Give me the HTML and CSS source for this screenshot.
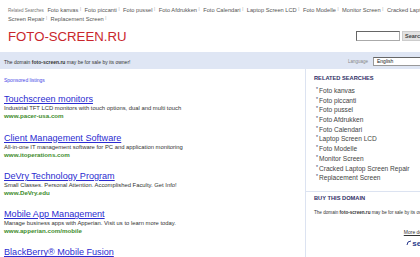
FILE: index.html
```html
<!DOCTYPE html>
<html lang="en">
<head>
    <meta charset="UTF-8">
    <title>foto-screen.ru</title>
    <link rel="stylesheet" href="styles.css">
</head>
<body>

    <div class="page">
        <div class="topbar">
            <span class="rs-label">Related Searches</span>
            <a href="#">Foto kanvas</a> <span class="sep">|</span>
            <a href="#">Foto piccanti</a> <span class="sep">|</span>
            <a href="#">Foto pussel</a> <span class="sep">|</span>
            <a href="#">Foto Afdrukken</a> <span class="sep">|</span>
            <a href="#">Foto Calendari</a> <span class="sep">|</span>
            <a href="#">Laptop Screen LCD</a> <span class="sep">|</span>
            <a href="#">Foto Modelle</a> <span class="sep">|</span>
            <a href="#">Monitor Screen</a> <span class="sep">|</span>
            <a href="#">Cracked Laptop Screen Repair</a> <span class="sep">|</span>
            <a href="#">Replacement Screen</a> <span class="sep">|</span>
        </div>

        <div class="header">
            <div class="logo">FOTO-SCREEN.RU</div>
            <form class="search">
                <input type="text">
                <button type="button">Search</button>
            </form>
        </div>

        <div class="band">
            <p>The domain <b>foto-screen.ru</b> may be for sale by its owner!</p>
            <div class="lang">
                <span>Language</span>
                <div class="lang-box">English</div>
            </div>
        </div>

        <div class="main">
            <div class="ads">
                <div class="sponsored">Sponsored listings</div>

                <div class="ad">
                    <a class="ad-title" href="#">Touchscreen monitors</a>
                    <div class="ad-desc">Industrial TFT LCD monitors with touch options, dual and multi touch</div>
                    <div class="ad-url">www.pacer-usa.com</div>
                </div>
                <div class="ad">
                    <a class="ad-title" href="#">Client Management Software</a>
                    <div class="ad-desc">All-in-one IT management software for PC and application monitoring</div>
                    <div class="ad-url">www.itoperations.com</div>
                </div>
                <div class="ad">
                    <a class="ad-title" href="#">DeVry Technology Program</a>
                    <div class="ad-desc">Small Classes. Personal Attention. Accomplished Faculty. Get Info!</div>
                    <div class="ad-url">www.DeVry.edu</div>
                </div>
                <div class="ad">
                    <a class="ad-title" href="#">Mobile App Management</a>
                    <div class="ad-desc">Manage business apps with Apperian. Visit us to learn more today.</div>
                    <div class="ad-url">www.apperian.com/mobile</div>
                </div>
                <div class="ad">
                    <a class="ad-title" href="#">BlackBerry® Mobile Fusion</a>
                    <div class="ad-desc">Manage BlackBerry, iOS and Android devices from one console.</div>
                    <div class="ad-url">www.blackberry.com</div>
                </div>
            </div>

            <div class="side">
                <div class="side-section">
                    <h3>RELATED SEARCHES</h3>
                    <ul>
                        <li><a href="#">Foto kanvas</a></li>
                        <li><a href="#">Foto piccanti</a></li>
                        <li><a href="#">Foto pussel</a></li>
                        <li><a href="#">Foto Afdrukken</a></li>
                        <li><a href="#">Foto Calendari</a></li>
                        <li><a href="#">Laptop Screen LCD</a></li>
                        <li><a href="#">Foto Modelle</a></li>
                        <li><a href="#">Monitor Screen</a></li>
                        <li><a href="#">Cracked Laptop Screen Repair</a></li>
                        <li><a href="#">Replacement Screen</a></li>
                    </ul>
                </div>
                <div class="side-section buy">
                    <h3>BUY THIS DOMAIN</h3>
                    <p>The domain <b>foto-screen.ru</b> may be for sale by its owner!</p>
                    <div class="more"><a href="#">More details</a></div>
                    <div class="sedo">
                        <svg width="6" height="6" viewBox="0 0 6 6"><path d="M5 1 Q1 1 1 5" fill="none" stroke="#2a3a8c" stroke-width="1"/></svg>sedo
                    </div>
                </div>
            </div>
        </div>
    </div>

</body>
</html>
```

FILE: styles.css
```css
html, body {
    overflow: hidden;
}
body {
    margin: 0;
    font-family: "Liberation Sans", Arial, sans-serif;
    color: #333;
    background: #fff;
}
a {
    text-decoration: none;
}
.page {
    width: 440px;
}
.topbar {
    width: 430px;
    height: 16.5px;
    padding: 5.5px 0 0 8px;
    font-size: 5.7px;
    line-height: 9px;
    color: #555;
    overflow: hidden;
}
.topbar a {
    color: #555;
}
.rs-label {
    font-size: 4.5px;
    color: #777;
    margin-right: 2px;
}
.sep {
    font-size: 4px;
    line-height: 4px;
    color: #999;
    vertical-align: 2px;
    margin-right: 2px;
}
.header {
    height: 30px;
    display: flex;
    justify-content: space-between;
    align-items: center;
    padding-left: 8px;
}
.logo {
    font-size: 13.2px;
    line-height: 1;
    color: #c9262c;
}
.search {
    display: flex;
    align-items: center;
    margin: 0 0 2px 0;
}
.search input {
    width: 42px;
    height: 8px;
    padding: 0;
    border: 1px solid #aaa;
    border-top-color: #666;
    border-left-color: #666;
    margin-right: 2px;
}
.search button {
    width: 38px;
    height: 10px;
    padding: 0 0 0 2px;
    border: 1px solid #ccc;
    background: #e2e2e2;
    font-family: "Liberation Sans", Arial, sans-serif;
    font-size: 5.5px;
    font-weight: bold;
    color: #444;
    text-align: left;
}
.band {
    height: 15px;
    padding: 2px 0 0 4px;
    background: #dfe6f4;
    display: flex;
    justify-content: space-between;
    align-items: center;
}
.band p {
    margin: 0;
    font-size: 5px;
}
.lang {
    display: flex;
    align-items: center;
    font-size: 4.5px;
    color: #888;
}
.lang-box {
    width: 62px;
    height: 7px;
    margin-left: 5px;
    padding-left: 3px;
    border: 1px solid #999;
    border-top-color: #666;
    background: #fff;
    font-size: 5px;
    line-height: 7px;
    color: #222;
}
.main {
    display: flex;
}
.ads {
    width: 301px;
    padding-left: 4px;
}
.sponsored {
    padding-top: 7.5px;
    font-size: 5px;
    line-height: 6px;
    color: #4747e6;
    margin-bottom: 12.8px;
}
.ad {
    margin-bottom: 13.3px;
}
.ad-title {
    display: block;
    font-size: 9.1px;
    line-height: 9px;
    color: #2b2bd0;
    text-decoration: underline;
}
.ad-desc {
    font-size: 5.85px;
    line-height: 8px;
    color: #333;
}
.ad-url {
    font-size: 6.2px;
    line-height: 8px;
    font-weight: bold;
    color: #3e8c2c;
}
.side {
    flex: 1;
    border-left: 1px solid #dce3f1;
    min-height: 200px;
}
.side-section {
    padding: 4.5px 9px 0 8px;
}
.side h3 {
    margin: 0;
    font-size: 5.7px;
    line-height: 8px;
    color: #2f2f66;
}
.side ul {
    list-style: none;
    margin: 4.5px 0 8px 0;
    padding: 0 0 0 2px;
}
.side li {
    font-size: 6.6px;
    line-height: 9.7px;
    height: 9.7px;
}
.side li::before {
    content: "*";
    font-size: 5px;
    line-height: 5px;
    color: #2f2f66;
    vertical-align: 2px;
    margin-right: 1px;
}
.side li a {
    color: #444;
}
.buy {
    border-top: 1px solid #dce3f1;
    padding-top: 2px;
}
.buy p {
    margin: 8.4px 0 0 0;
    font-size: 4.6px;
    line-height: 6px;
    color: #333;
}
.more {
    margin-top: 12.6px;
    text-align: right;
    font-size: 5px;
    line-height: 6px;
}
.more a {
    color: #333;
    text-decoration: underline;
}
.sedo {
    margin-top: 4px;
    text-align: right;
    font-size: 8px;
    font-weight: bold;
    line-height: 9px;
    color: #2a3a8c;
}
```
